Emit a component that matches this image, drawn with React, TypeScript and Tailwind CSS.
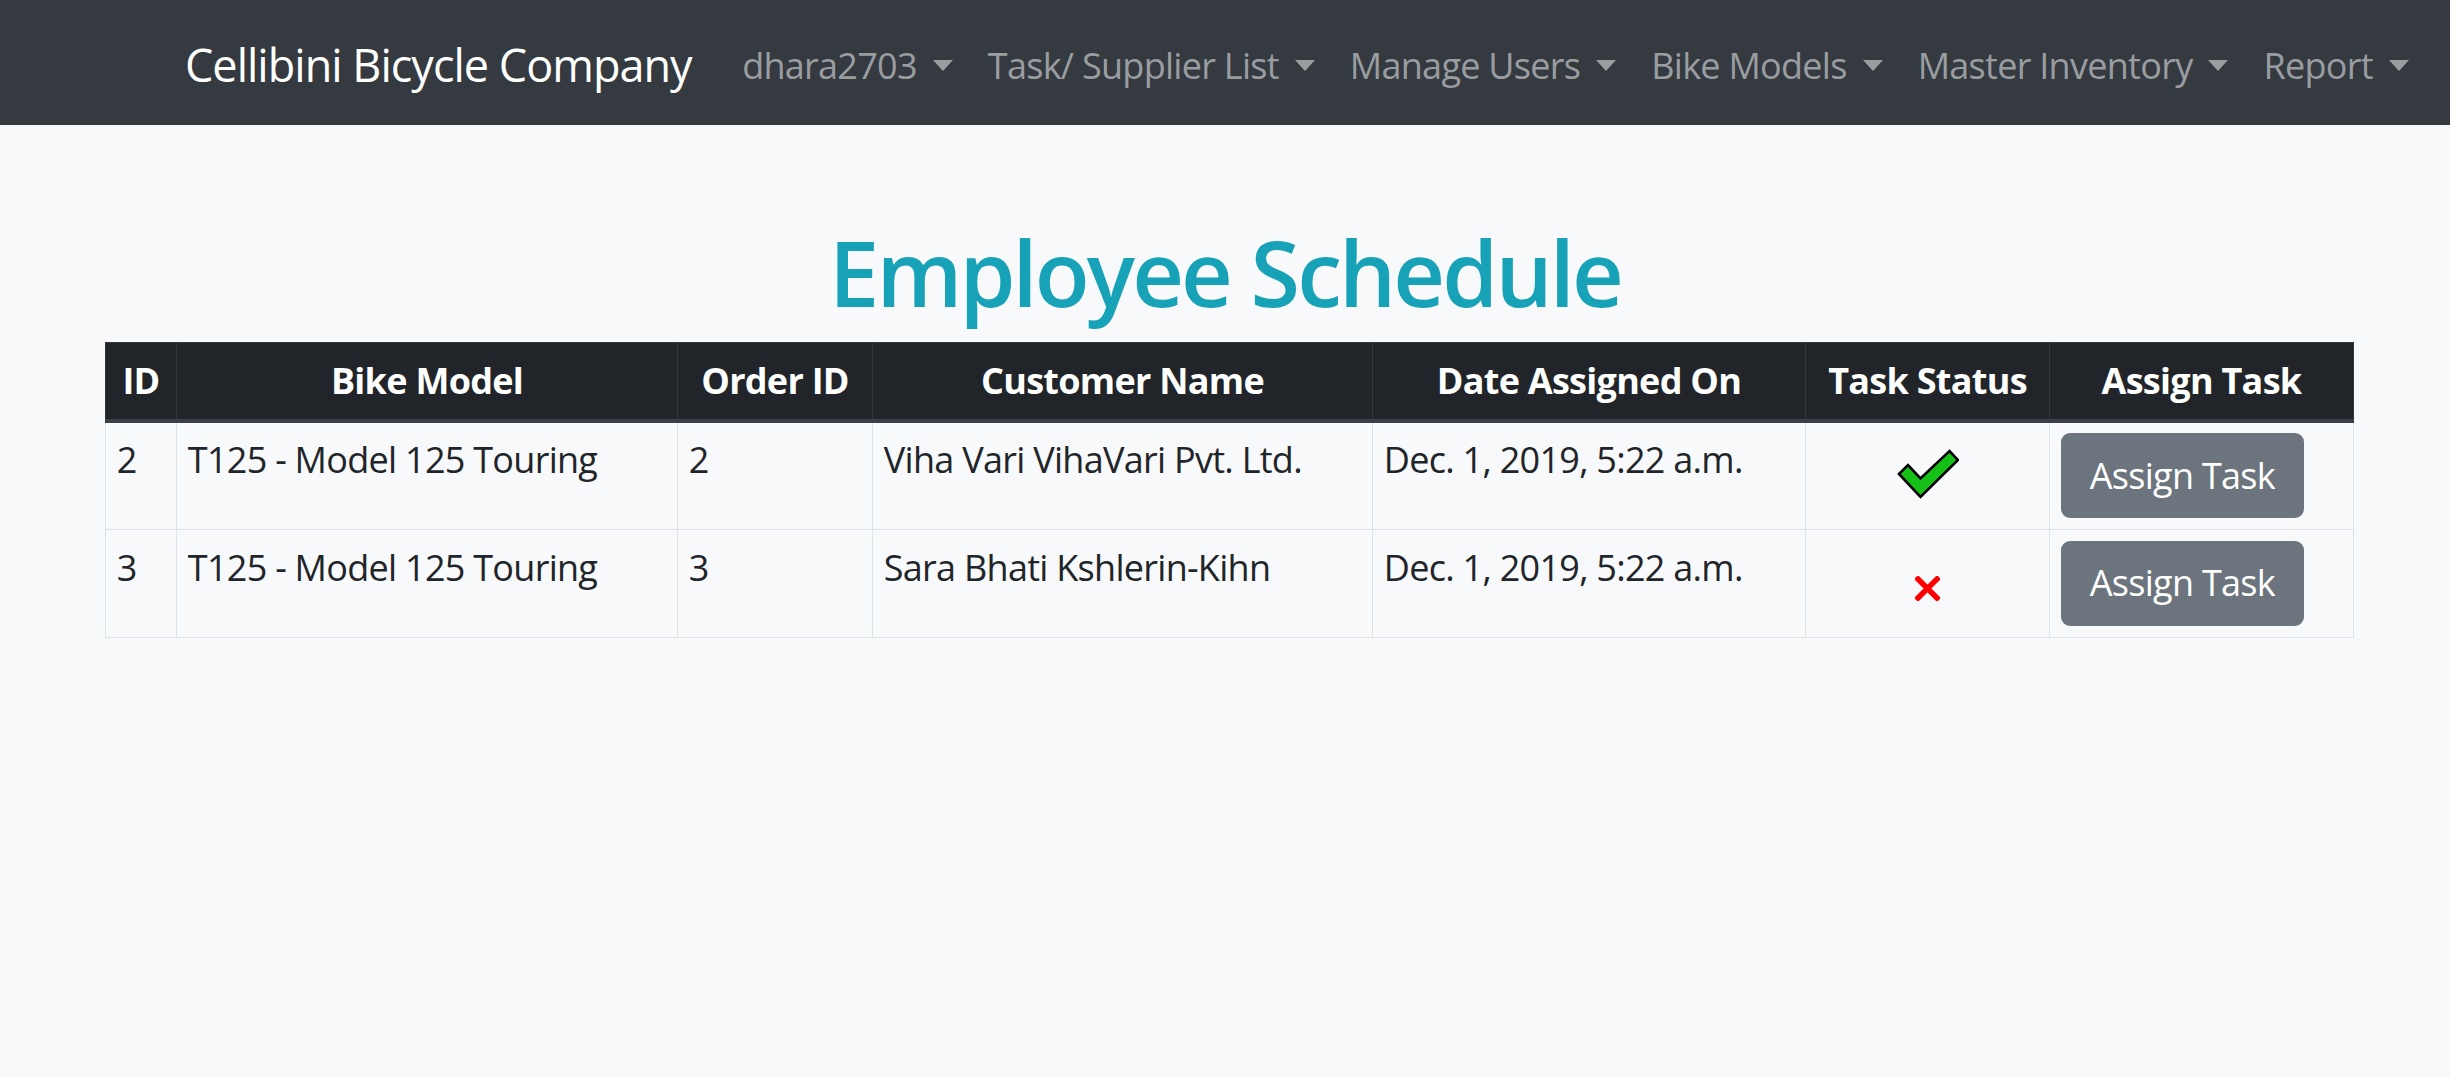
const navItems = ["dhara2703", "Task/ Supplier List", "Manage Users", "Bike Models", "Master Inventory", "Report"]

const rows = [
  { id: "2", model: "T125 - Model 125 Touring", order: "2", customer: "Viha Vari VihaVari Pvt. Ltd.", date: "Dec. 1, 2019, 5:22 a.m.", done: true },
  { id: "3", model: "T125 - Model 125 Touring", order: "3", customer: "Sara Bhati Kshlerin-Kihn", date: "Dec. 1, 2019, 5:22 a.m.", done: false },
]

const headers = [
  { label: "ID", w: "w-[71px]" },
  { label: "Bike Model", w: "w-[501px]" },
  { label: "Order ID", w: "w-[195px]" },
  { label: "Customer Name", w: "w-[500px]" },
  { label: "Date Assigned On", w: "w-[433px]" },
  { label: "Task Status", w: "w-[244px]" },
  { label: "Assign Task", w: "w-[304px]" },
]

function Caret() {
  return <span className="ml-[16px] inline-block w-0 h-0 shrink-0 border-t-[11px] border-t-current border-x-[10px] border-x-transparent" />
}

function CheckIcon() {
  return (
    <svg width="62" height="50" viewBox="-1 -1 62 50" className="mx-auto block">
      <polygon
        points="1,24 10,15 22.5,28.5 51.5,1 60,10 22.5,47"
        fill="#17c017"
        stroke="#000"
        strokeWidth="2.6"
      />
    </svg>
  )
}

function CrossIcon() {
  return (
    <svg width="25" height="25" viewBox="0 0 25 25" className="mx-auto block">
      <path d="M3 3 L22 22 M22 3 L3 22" stroke="#ff0000" strokeWidth="5.5" strokeLinecap="square" />
    </svg>
  )
}

export default function App() {
  return (
    <div className="min-h-[1077px] bg-[#f8f9fa] font-['Open_Sans','Noto_Sans',sans-serif] text-[#212529]">
      <nav className="h-[125px] bg-[#343a40] flex items-center pl-[185px] whitespace-nowrap">
        <span className="shrink-0 text-white text-[45px] leading-[1.5] mr-[33px] tracking-[-0.022em] translate-y-[2px]">Cellibini Bicycle Company</span>
        <ul className="flex items-center shrink-0 translate-y-[3px]">
          {navItems.map((item) => (
            <li key={item} className="shrink-0 px-[17.5px] text-[36px] leading-[1.5] text-[#9a9da0] tracking-[-0.02em] flex items-center">
              {item}
              <Caret />
            </li>
          ))}
        </ul>
      </nav>

      <h1 className="mt-[93px] mb-[16px] text-center text-[90px] leading-[1.2] font-semibold text-[#17a2b8] tracking-[-0.032em]">
        Employee Schedule
      </h1>

      <table className="ml-[105px] w-[2248px] table-fixed border-collapse text-[36px] leading-[1.5] tracking-[-0.02em]">
        <thead>
          <tr className="bg-[#212529] text-white">
            {headers.map((h) => (
              <th key={h.label} className={`${h.w} p-[10.8px] border border-[#32383e] border-b-[4.5px] border-b-[#3a4047] font-bold text-center`}>
                {h.label}
              </th>
            ))}
          </tr>
        </thead>
        <tbody>
          {rows.map((r) => (
            <tr key={r.id}>
              <td className="p-[10.8px] border border-[#dee2e6] align-top">{r.id}</td>
              <td className="p-[10.8px] border border-[#dee2e6] align-top">{r.model}</td>
              <td className="p-[10.8px] border border-[#dee2e6] align-top">{r.order}</td>
              <td className="p-[10.8px] border border-[#dee2e6] align-top">{r.customer}</td>
              <td className="p-[10.8px] border border-[#dee2e6] align-top">{r.date}</td>
              <td className="p-[10.8px] border border-[#dee2e6] align-top">
                {r.done ? (
                  <div className="pt-[16px]"><CheckIcon /></div>
                ) : (
                  <div className="pt-[35px]"><CrossIcon /></div>
                )}
              </td>
              <td className="p-[10.8px] border border-[#dee2e6] align-top">
                <button className="bg-[#6c757d] border-[2.25px] border-[#6c757d] text-white rounded-[9px] px-[27px] py-[13.5px] text-[36px] leading-[1.5]">
                  Assign Task
                </button>
              </td>
            </tr>
          ))}
        </tbody>
      </table>
    </div>
  )
}
